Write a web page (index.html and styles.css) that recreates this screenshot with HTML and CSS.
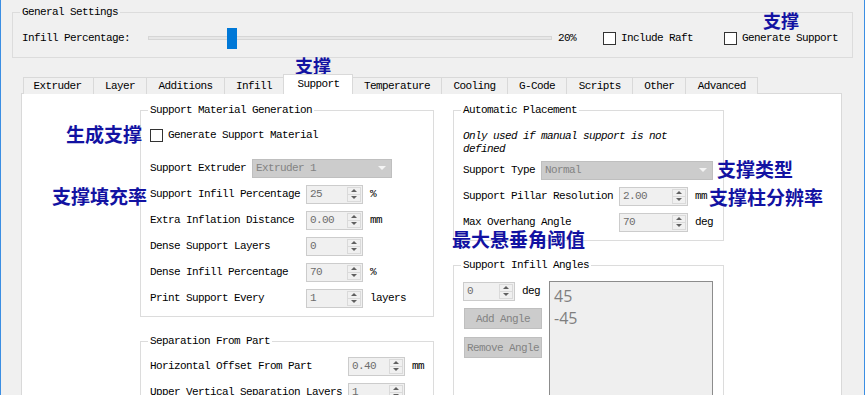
FILE: index.html
```html
<!DOCTYPE html>
<html lang="en">

<head>
	<meta charset="UTF-8">
	<meta name="viewport" content="width=device-width, initial-scale=1.0">
	<title>Print Settings</title>
	<link rel="stylesheet" href="styles.css">
</head>

<body>
	<fieldset class="group general">
		<legend>General Settings</legend>
		<div class="general-row">
			<span class="general-label">Infill Percentage:</span>
			<div class="slider">
				<div class="groove"></div>
				<div class="handle"></div>
			</div>
			<span class="slider-value">20%</span>
			<label class="check raft"><span class="box"></span>Include Raft</label>
			<label class="check"><span class="box"></span>Generate Support</label>
		</div>
	</fieldset>

	<div class="tabs">
		<div class="tab">Extruder</div>
		<div class="tab">Layer</div>
		<div class="tab">Additions</div>
		<div class="tab">Infill</div>
		<div class="tab active">Support</div>
		<div class="tab">Temperature</div>
		<div class="tab">Cooling</div>
		<div class="tab">G-Code</div>
		<div class="tab">Scripts</div>
		<div class="tab">Other</div>
		<div class="tab">Advanced</div>
	</div>

	<div class="pane">
		<div class="column">
			<fieldset class="group support-gen">
				<legend>Support Material Generation</legend>
				<label class="check gen-check"><span class="box"></span>Generate Support Material</label>
				<div class="form-row">
					<span class="row-label narrow">Support Extruder</span>
					<div class="combo"><span>Extruder 1</span><i></i></div>
				</div>
				<div class="form-row">
					<span class="row-label">Support Infill Percentage</span>
					<div class="spin"><span class="spin-value">25</span><span class="spin-arrows"><i class="up"></i><i class="down"></i></span></div>
					<span class="unit">%</span>
				</div>
				<div class="form-row">
					<span class="row-label">Extra Inflation Distance</span>
					<div class="spin"><span class="spin-value">0.00</span><span class="spin-arrows"><i class="up"></i><i class="down"></i></span></div>
					<span class="unit">mm</span>
				</div>
				<div class="form-row">
					<span class="row-label">Dense Support Layers</span>
					<div class="spin"><span class="spin-value">0</span><span class="spin-arrows"><i class="up"></i><i class="down"></i></span></div>
				</div>
				<div class="form-row">
					<span class="row-label">Dense Infill Percentage</span>
					<div class="spin"><span class="spin-value">70</span><span class="spin-arrows"><i class="up"></i><i class="down"></i></span></div>
					<span class="unit">%</span>
				</div>
				<div class="form-row">
					<span class="row-label">Print Support Every</span>
					<div class="spin"><span class="spin-value">1</span><span class="spin-arrows"><i class="up"></i><i class="down"></i></span></div>
					<span class="unit">layers</span>
				</div>
			</fieldset>

			<fieldset class="group separation">
				<legend>Separation From Part</legend>
				<div class="form-row first">
					<span class="row-label wide">Horizontal Offset From Part</span>
					<div class="spin"><span class="spin-value">0.40</span><span class="spin-arrows"><i class="up"></i><i class="down"></i></span></div>
					<span class="unit">mm</span>
				</div>
				<div class="form-row">
					<span class="row-label wide">Upper Vertical Separation Layers</span>
					<div class="spin"><span class="spin-value">1</span><span class="spin-arrows"><i class="up"></i><i class="down"></i></span></div>
				</div>
			</fieldset>
		</div>

		<div class="column">
			<fieldset class="group placement">
				<legend>Automatic Placement</legend>
				<p class="note">Only used if manual support is not defined</p>
				<div class="form-row type-row">
					<span class="row-label short">Support Type</span>
					<div class="combo long"><span>Normal</span><i></i></div>
				</div>
				<div class="form-row">
					<span class="row-label">Support Pillar Resolution</span>
					<div class="spin wide"><span class="spin-value">2.00</span><span class="spin-arrows"><i class="up"></i><i class="down"></i></span></div>
					<span class="unit">mm</span>
				</div>
				<div class="form-row">
					<span class="row-label">Max Overhang Angle</span>
					<div class="spin wide"><span class="spin-value">70</span><span class="spin-arrows"><i class="up"></i><i class="down"></i></span></div>
					<span class="unit">deg</span>
				</div>
			</fieldset>

			<fieldset class="group angles">
				<legend>Support Infill Angles</legend>
				<div class="angles-body">
					<div class="angles-controls">
						<div class="angle-input">
							<div class="spin small"><span class="spin-value">0</span><span class="spin-arrows"><i class="up"></i><i class="down"></i></span></div>
							<span class="unit">deg</span>
						</div>
						<button class="btn" disabled>Add Angle</button>
						<button class="btn" disabled>Remove Angle</button>
					</div>
					<ul class="angle-list">
						<li>45</li>
						<li>-45</li>
					</ul>
				</div>
			</fieldset>
		</div>
	</div>

	<!-- annotations -->
	<div class="tag tag-top">支撑</div>
	<div class="tag tag-tab">支撑</div>
	<div class="tag tag-gen">生成支撑</div>
	<div class="tag tag-infill">支撑填充率</div>
	<div class="tag tag-type">支撑类型</div>
	<div class="tag tag-pillar">支撑柱分辨率</div>
	<div class="tag tag-overhang">最大悬垂角阈值</div>
</body>

</html>
```

FILE: styles.css
```css
/* Base reset */
* {
	margin: 0;
	padding: 0;
	box-sizing: border-box;
}

body {
	position: relative;
	width: 865px;
	height: 395px;
	overflow: hidden;
	padding-top: 6px;
	background: #f0f0f0;
	border-left: 1px solid #3b8ee3;
	border-right: 1px solid #3b8ee3;
	font: 11px/12px "Liberation Mono", "DejaVu Sans Mono", monospace;
	letter-spacing: -0.6px;
	color: #000;
}

/* Group boxes */
.group {
	border: 1px solid #dcdcdc;
	padding: 0 8px 8px 9px;
	min-width: 0;
}

.group legend {
	padding: 0 2px;
	margin-left: -2px;
	line-height: 12px;
}

.general {
	margin-left: 11px;
	width: 841px;
	padding-bottom: 9px;
}

.general-row {
	display: flex;
	align-items: center;
	height: 20px;
	margin-top: 10px;
}

.general-label {
	width: 126px;
}

.slider {
	position: relative;
	width: 404px;
	height: 20px;
	margin-right: 6px;
}

.groove {
	margin-top: 8px;
	height: 4px;
	background: #e7e7e7;
	border: 1px solid #d6d6d6;
}

.handle {
	position: absolute;
	left: 79px;
	top: 0;
	width: 10px;
	height: 21px;
	background: #0078d7;
}

.slider-value {
	width: 45px;
}

.check {
	display: flex;
	align-items: center;
}

.check.raft {
	margin-right: 31px;
}

.box {
	width: 13px;
	height: 13px;
	margin-right: 5px;
	border: 1px solid #333;
	background: #fff;
}

/* Tabs */
.tabs {
	display: flex;
	align-items: flex-end;
	height: 20px;
	margin: 16px 0 0 22px;
}

.tab {
	height: 17px;
	padding: 0 11px 0 11.5px;
	margin-left: -1px;
	border: 1px solid #d9d9d9;
	border-bottom: none;
	line-height: 16px;
	background: #f0f0f0;
}

.tab:first-child {
	margin-left: 0;
	padding-left: 9.5px;
}

.tab.active {
	position: relative;
	z-index: 1;
	height: 20px;
	padding: 1px 12px 0 13.5px;
	background: #fff;
}

.pane {
	display: grid;
	grid-template-columns: 294px 271px;
	column-gap: 19px;
	align-items: start;
	width: 821px;
	height: 320px;
	margin: -1px 0 0 20px;
	padding: 10px 0 0 118px;
	background: #fff;
	border: 1px solid #d9d9d9;
}

/* Form rows */
.form-row {
	display: flex;
	align-items: center;
	height: 20px;
	margin-top: 6px;
}

.row-label {
	flex: none;
	width: 156px;
}

.row-label.narrow {
	width: 102px;
}

.row-label.short {
	width: 78px;
}

.row-label.wide {
	width: 198px;
}

.unit {
	margin-left: 7px;
}

.gen-check {
	height: 20px;
	margin: 9px 0 13px;
}

.separation {
	margin-top: 18px;
}

.separation .form-row.first {
	margin-top: 9px;
}

.placement .type-row {
	margin-top: 4px;
}

.note {
	width: 230px;
	margin-top: 14px;
	font-style: italic;
	line-height: 13px;
}

/* Spin boxes */
.spin {
	display: flex;
	width: 57px;
	height: 19px;
	border: 1px solid #cccccc;
	background: #f0f0f0;
	color: #6d6d6d;
}

.spin.wide {
	width: 69px;
}

.spin.small {
	width: 52px;
}

.spin-value {
	flex: 1;
	padding-left: 3px;
	line-height: 17px;
}

.spin-arrows {
	display: flex;
	flex-direction: column;
	width: 14px;
	margin: 1px 1px 1px 0;
	border: 1px solid #dadada;
}

.spin-arrows i {
	flex: 1;
	display: flex;
	align-items: center;
	justify-content: center;
}

.spin-arrows i + i {
	border-top: 1px solid #dadada;
}

.spin-arrows i::after {
	content: "";
	border-left: 3px solid transparent;
	border-right: 3px solid transparent;
}

.spin-arrows .up::after {
	border-bottom: 3px solid #606060;
}

.spin-arrows .down::after {
	border-top: 3px solid #606060;
}

/* Combo boxes */
.combo {
	display: flex;
	align-items: center;
	justify-content: space-between;
	width: 140px;
	height: 19px;
	padding: 0 5px 0 3px;
	border: 1px solid #bfbfbf;
	background: #cccccc;
	color: #838383;
}

.combo.long {
	width: 172px;
}

.combo i {
	border-left: 4px solid transparent;
	border-right: 4px solid transparent;
	border-top: 4px solid #f4f4f4;
}

/* Angles */
.angles {
	margin-top: 18px;
}

.angles-body {
	display: flex;
	gap: 7px;
	margin-top: 10px;
}

.angles-controls {
	width: 79px;
}

.angle-input {
	display: flex;
	align-items: center;
	height: 20px;
}

.btn {
	display: block;
	width: 78px;
	height: 21px;
	margin: 7px 0 0 1px;
	border: 1px solid #bfbfbf;
	background: #cccccc;
	color: #838383;
	font: inherit;
	letter-spacing: inherit;
}

.btn + .btn {
	margin-top: 8px;
}

.angle-list {
	list-style: none;
	width: 164px;
	height: 130px;
	padding: 3px 0 0 4px;
	border: 1px solid #8c8c8c;
	background: #efefef;
	font: 16px/22px "Open Sans", sans-serif;
	letter-spacing: 0;
	color: #7f7f7f;
}

/* Chinese annotations laid over the window */
.tag {
	position: absolute;
	font: bold 19px/19px "Noto Sans CJK SC", sans-serif;
	letter-spacing: 0;
	color: #1212a2;
	white-space: nowrap;
}

.tag-top {
	left: 762px;
	top: 11px;
	font-size: 18px;
}

.tag-tab {
	left: 294px;
	top: 56px;
	font-size: 18px;
}

.tag-gen {
	left: 65px;
	top: 124px;
}

.tag-infill {
	left: 51px;
	top: 186px;
}

.tag-type {
	left: 716px;
	top: 159px;
}

.tag-pillar {
	left: 708px;
	top: 187px;
}

.tag-overhang {
	left: 451px;
	top: 229px;
}
```
